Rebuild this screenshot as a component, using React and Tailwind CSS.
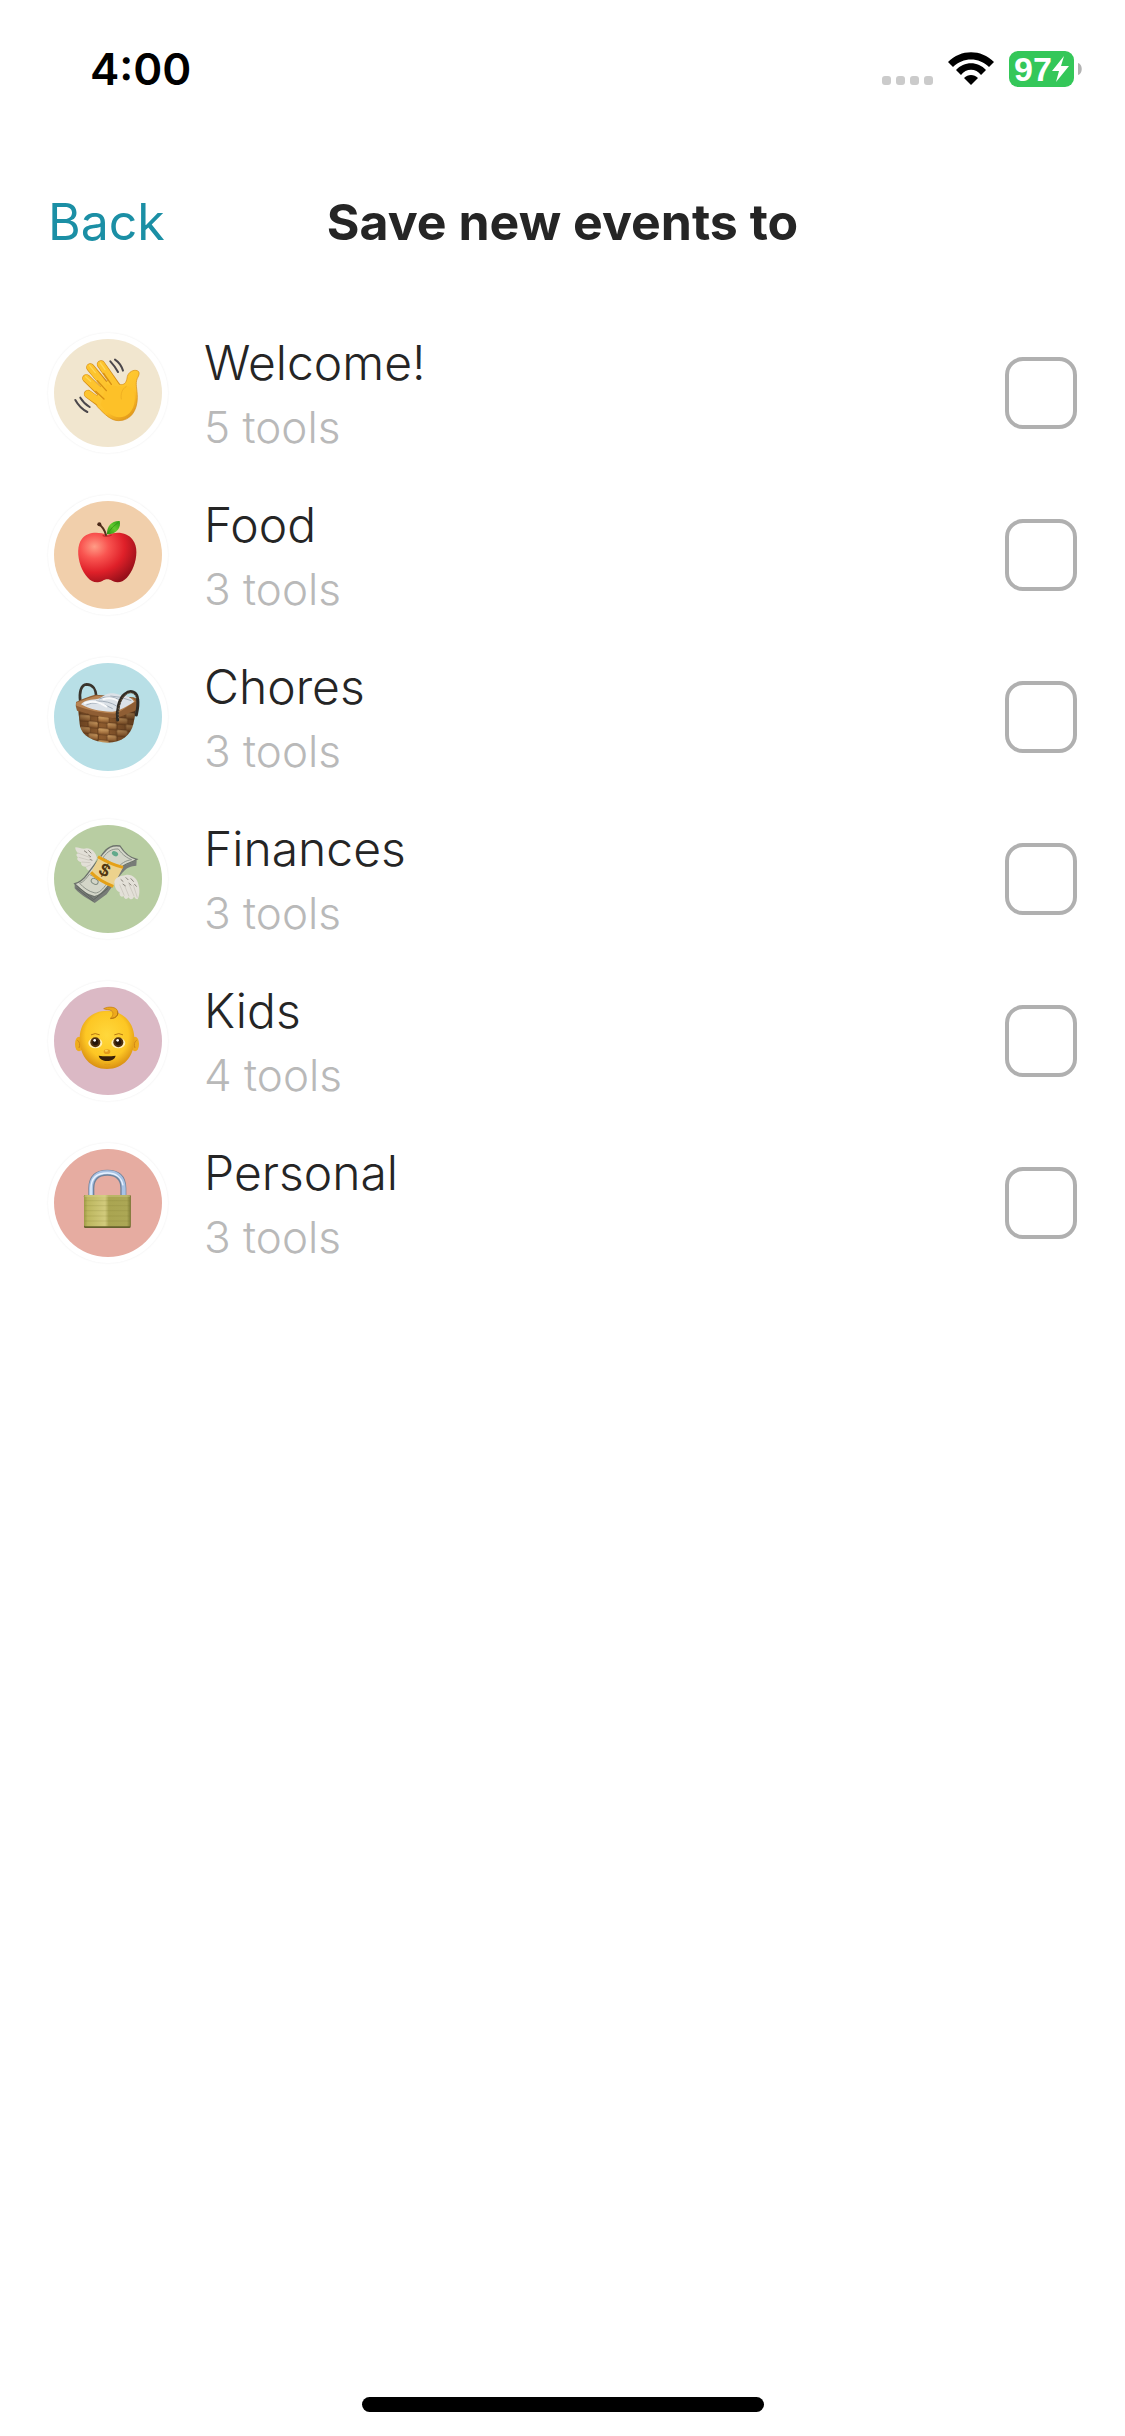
import React, { useState } from "react";

const WaveIcon = () => (
  <svg viewBox="42 42 324 324" className="w-full h-full" aria-hidden="true">
    <defs>
      <linearGradient id="handFill" x1="0.2" y1="0.1" x2="0.8" y2="1">
        <stop offset="0" stopColor="#ffcd35" />
        <stop offset="0.6" stopColor="#fdc02a" />
        <stop offset="1" stopColor="#de9317" />
      </linearGradient>
    </defs>
    <g fill="none" strokeLinecap="round" stroke="#d48c17" strokeWidth="25">
      <path d="M183 118 L228 182" />
      <path d="M151 127 L205 192" />
      <path d="M139 160 L190 210" />
      <path d="M144 207 L186 238" />
    </g>
    <path
      d="M205 165 C220 172 232 178 243 179 C257 179 260 168 262 154 C266 141 280 133 292 137 C301 141 297 151 292 160 C285 176 292 192 292 217 C292 257 272 287 236 287 C213 287 196 270 172 245 L166 226 L180 186Z"
      fill="url(#handFill)"
      stroke="#d48c17"
      strokeWidth="2"
    />
    <g fill="none" strokeLinecap="round" stroke="#fdc42e" strokeWidth="21">
      <path d="M183 118 L230 187" />
      <path d="M151 127 L210 202" />
      <path d="M139 160 L202 220" />
      <path d="M144 207 L192 240" />
    </g>
    <path
      d="M200 178 C228 185 244 187 262 184 C281 187 287 208 284 228 C281 258 262 277 238 277 C216 277 198 258 182 240 L190 210Z"
      fill="#fdc128"
    />
    <g fill="none" stroke="#d78f14" strokeWidth="4" strokeLinecap="round">
      <path d="M191 145 L214 178" />
      <path d="M172 167 L199 197" />
      <path d="M167 199 L192 222" />
      <path d="M259 184 C246 192 241 207 244 222" strokeWidth="2" opacity="0.5" />
    </g>
    <g fill="none" stroke="#ffe06c" strokeWidth="4" strokeLinecap="round" opacity="0.7">
      <path d="M181 114 L195 134" />
      <path d="M149 122 L166 143" />
      <path d="M137 155 L152 169" />
    </g>
    <g fill="none" stroke="#4b474b" strokeWidth="6" strokeLinecap="round">
      <path d="M211 109 Q225 124 234 141" />
      <path d="M225 104 Q242 115 249 137" />
      <path d="M121 218 Q132 236 149 246" />
      <path d="M106 225 Q119 249 142 261" />
    </g>
  </svg>
);

const AppleIcon = () => (
  <svg viewBox="42 42 324 324" className="w-full h-full" aria-hidden="true">
    <defs>
      <radialGradient id="appleFill" cx="0.28" cy="0.28" r="0.8">
        <stop offset="0" stopColor="#ff9c86" />
        <stop offset="0.3" stopColor="#f95450" />
        <stop offset="0.65" stopColor="#df2029" />
        <stop offset="1" stopColor="#98101a" />
      </radialGradient>
      <linearGradient id="leafFill" x1="1" y1="0" x2="0" y2="1">
        <stop offset="0" stopColor="#2c9e17" />
        <stop offset="0.5" stopColor="#62c92d" />
        <stop offset="1" stopColor="#2c8b13" />
      </linearGradient>
    </defs>
    <path
      d="M202 144 C229 132 262 136 278 158 C294 178 291 211 281 238 C270 268 251 287 232 286 C219 285 213 277 202 277 C191 277 186 285 174 286 C151 288 132 263 122 236 C112 207 111 174 126 155 C142 134 176 133 202 144Z"
      fill="url(#appleFill)"
    />
    <path d="M188 145 Q200 151 215 144" stroke="#a8191b" strokeWidth="4" fill="none" opacity="0.6" />
    <path
      d="M198 144 C194 129 187 118 176 112"
      fill="none"
      stroke="#55301c"
      strokeWidth="6"
      strokeLinecap="round"
    />
    <circle cx="178" cy="112" r="6" fill="#4b2919" />
    <path
      d="M201 142 C200 119 214 101 239 102 C244 121 231 142 201 142Z"
      fill="url(#leafFill)"
    />
    <path d="M203 139 Q216 119 235 106" fill="none" stroke="#288a13" strokeWidth="2" />
  </svg>
);

const BasketIcon = () => (
  <svg viewBox="42 42 324 324" className="w-full h-full" aria-hidden="true">
    <defs>
      <linearGradient id="basketShade" x1="0" x2="1">
        <stop offset="0" stopColor="#3a200e" stopOpacity="0.45" />
        <stop offset="0.4" stopColor="#3a200e" stopOpacity="0" />
        <stop offset="1" stopColor="#2a170a" stopOpacity="0.5" />
      </linearGradient>
      <linearGradient id="weaveFill" x1="0" x2="0" y1="0" y2="1">
        <stop offset="0" stopColor="#d5a467" />
        <stop offset="1" stopColor="#966232" />
      </linearGradient>
      <pattern id="weave" width="56" height="36" patternUnits="userSpaceOnUse" patternTransform="translate(118 196) skewY(5)">
        <rect width="56" height="36" fill="#6d4420" />
        <rect x="1" y="1" width="31" height="16" rx="3" fill="url(#weaveFill)" />
        <rect x="34" y="2" width="20" height="14" rx="2" fill="#8d5b2e" />
        <rect x="28" y="19" width="27" height="16" rx="3" fill="url(#weaveFill)" />
        <rect x="3" y="20" width="22" height="14" rx="2" fill="#8d5b2e" />
      </pattern>
    </defs>
    <path
      d="M121 158 C117 132 122 107 140 106 C158 106 168 121 169 143"
      fill="none"
      stroke="#39342c"
      strokeWidth="8"
    />
    <path
      d="M114 177 L120 232 C126 260 160 280 203 281 C245 281 272 258 280 225 L290 174Z"
      fill="url(#weave)"
    />
    <path
      d="M114 177 L120 232 C126 260 160 280 203 281 C245 281 272 258 280 225 L290 174Z"
      fill="url(#basketShade)"
    />
    <path
      d="M108 159 C128 149 145 143 165 137 L280 145 C292 148 298 154 297 166 L295 181 C256 197 239 206 218 207 C180 204 143 193 111 185 Q105 171 108 159Z"
      fill="#8f5e34"
    />
    <path
      d="M108 161 C135 151 151 144 171 140 L278 148 L287 157 L232 193 C194 195 145 183 109 170Z"
      fill="#b78352"
    />
    <path
      d="M123 166 C137 151 153 153 175 149 C190 145 196 132 214 133 C230 130 239 141 257 140 C270 144 279 151 282 158 C263 171 239 185 218 188 C184 189 151 181 123 166Z"
      fill="#dce2e8"
    />
    <path
      d="M139 168 Q170 151 218 179 M168 156 Q207 155 231 172 M177 150 Q207 136 243 154 M211 141 Q242 142 274 155"
      fill="none"
      stroke="#a3aeba"
      strokeWidth="3"
    />
    <path
      d="M132 163 Q167 149 201 174 M188 151 Q217 141 242 161"
      fill="none"
      stroke="#f9fafb"
      strokeWidth="6"
    />
    <path
      d="M233 213 C229 186 237 148 255 135 C272 120 292 129 293 151 C295 164 293 180 289 198"
      fill="none"
      stroke="#302c25"
      strokeWidth="9"
      strokeLinecap="round"
    />
    <path
      d="M236 208 C231 183 241 149 257 137 C271 126 286 131 290 148"
      fill="none"
      stroke="#7a6145"
      strokeWidth="3"
      strokeDasharray="5 4"
    />
  </svg>
);

const MoneyIcon = () => (
  <svg viewBox="42 42 324 324" className="w-full h-full" aria-hidden="true">
    {/* left wing */}
    <path
      d="M106 109 C119 109 127 116 140 112 C158 113 168 127 171 141 L153 178 C143 180 138 173 138 167 C126 168 121 159 124 154 C112 151 109 143 114 139 C105 132 111 127 116 128 C108 121 105 115 106 109Z"
      fill="#e2dfd7"
    />
    <path
      d="M114 126 L151 140 M116 139 L149 148 M125 153 L151 155 M139 167 L153 161"
      stroke="#c4c0b7"
      strokeWidth="2"
    />
    <path
      d="M132 119 L142 126 M145 118 L154 127 M145 132 L153 138 M149 145 L157 148"
      stroke="#8b877e"
      strokeWidth="3"
    />
    {/* bundle of notes */}
    <path d="M104 218 L104 232 C124 255 143 262 164 276 L200 250 L241 193 C260 166 274 166 289 164 L290 148 L237 170Z" fill="#777b77" />
    <path
      d="M104 218 C122 214 132 204 143 188 L187 130 C202 108 217 102 240 105 C255 129 276 142 291 145 C274 158 254 153 237 177 L205 224 C190 244 178 256 163 257 C136 251 120 236 104 218Z"
      fill="#d3d5c8"
      stroke="#6d736c"
      strokeWidth="4"
    />
    <path
      d="M119 217 C132 213 141 199 148 190 L201 217 C189 234 178 246 165 246 C144 241 130 229 119 217Z M189 140 C203 121 215 113 235 114 C250 134 260 140 275 146 C254 149 245 158 234 168Z"
      fill="none"
      stroke="#8f958c"
      strokeWidth="3"
    />
    <ellipse cx="225" cy="128" rx="10" ry="7" fill="#62a98b" transform="rotate(30 225 128)" />
    <ellipse cx="164" cy="211" rx="11" ry="8" fill="none" stroke="#7f8b80" strokeWidth="3" transform="rotate(30 164 211)" />
    <path d="M112 225 L161 266 L204 232 M109 231 L160 271" fill="none" stroke="#535953" strokeWidth="2" />
    {/* wrapper */}
    <path d="M179 134 C200 149 225 159 250 167 L218 229 C194 220 172 207 151 190Z" fill="#ecd28d" />
    <path d="M174 137 C201 153 225 163 249 169" fill="none" stroke="#e5a117" strokeWidth="9" />
    <path d="M153 184 C172 205 195 217 220 226" fill="none" stroke="#e5a117" strokeWidth="9" />
    <text
      x="192"
      y="195"
      fontFamily="'Liberation Sans', sans-serif"
      fontSize="54"
      fontWeight="700"
      fill="#513711"
      textAnchor="middle"
      transform="rotate(27 191 181)"
    >
      $
    </text>
    {/* right wing */}
    <path
      d="M223 213 C226 198 241 195 257 192 C276 188 292 203 295 220 C300 235 299 255 293 265 C286 265 284 260 282 256 C280 267 270 268 266 259 C259 268 252 263 251 255 C243 261 237 252 239 243 C230 242 223 228 223 213Z"
      fill="#e3e0d8"
    />
    <path
      d="M239 221 L253 254 M253 222 L267 256 M267 220 L282 255 M280 222 L292 260"
      stroke="#c4c0b7"
      strokeWidth="2"
    />
    <path
      d="M242 205 L250 212 M257 199 L265 207 M272 202 L281 212 M248 219 L257 225 M266 216 L274 223 M283 219 L290 227"
      stroke="#8b877e"
      strokeWidth="3"
    />
  </svg>
);

const BabyIcon = () => (
  <svg viewBox="42 42 324 324" className="w-full h-full" aria-hidden="true">
    <defs>
      <radialGradient id="babyFace" cx="0.5" cy="0.42" r="0.6">
        <stop offset="0" stopColor="#ffd83c" />
        <stop offset="0.65" stopColor="#fdc724" />
        <stop offset="1" stopColor="#d68a11" />
      </radialGradient>
    </defs>
    <ellipse cx="117" cy="213" rx="12" ry="22" fill="#efac1d" />
    <ellipse cx="285" cy="213" rx="12" ry="22" fill="#efac1d" />
    <path d="M112 202 Q123 208 117 225 M290 202 Q279 208 285 225" fill="none" stroke="#ce8518" strokeWidth="3" />
    <path
      d="M201 113 C249 113 282 148 283 195 C285 247 252 288 201 288 C150 288 117 247 119 195 C120 148 153 113 201 113Z"
      fill="url(#babyFace)"
    />
    <path
      d="M191 107 C205 99 230 101 233 115 C237 128 224 137 210 137 C219 130 222 118 214 113 C206 108 198 111 191 107Z"
      fill="#eda91d"
      stroke="#c17b12"
      strokeWidth="2"
    />
    <path d="M213 136 C229 136 236 126 232 115" fill="none" stroke="#b47313" strokeWidth="3" />
    <path d="M154 185 Q165 178 178 185 M224 185 Q237 178 248 185" fill="none" stroke="#b87913" strokeWidth="3" strokeLinecap="round" />
    <ellipse cx="166" cy="210" rx="21" ry="16" fill="#fff0b8" />
    <ellipse cx="235" cy="210" rx="21" ry="16" fill="#fff0b8" />
    <circle cx="166" cy="208" r="15" fill="#50300e" />
    <circle cx="235" cy="208" r="15" fill="#50300e" />
    <circle cx="166" cy="208" r="9" fill="#24150b" />
    <circle cx="235" cy="208" r="9" fill="#24150b" />
    <circle cx="164" cy="202" r="4" fill="#fff" />
    <circle cx="233" cy="202" r="4" fill="#fff" />
    <ellipse cx="201" cy="236" rx="10" ry="7" fill="#e59b1b" />
    <ellipse cx="199" cy="233" rx="5" ry="3" fill="#ffcf4f" />
    <path d="M176 248 Q201 252 227 248 C224 259 214 264 201 264 C189 264 179 259 176 248Z" fill="#392009" />
    <path d="M193 274 Q202 277 211 274" fill="none" stroke="#dc9819" strokeWidth="2" />
  </svg>
);

const LockIcon = () => (
  <svg viewBox="42 42 324 324" className="w-full h-full" aria-hidden="true">
    <defs>
      <linearGradient id="lockBody" x1="0" x2="1">
        <stop offset="0" stopColor="#9e9b46" />
        <stop offset="0.08" stopColor="#bdb75f" />
        <stop offset="0.45" stopColor="#d1ca7c" />
        <stop offset="0.53" stopColor="#aaa551" />
        <stop offset="0.92" stopColor="#aca755" />
        <stop offset="1" stopColor="#807d36" />
      </linearGradient>
    </defs>
    <path
      d="M154 184 L154 160 C154 127 172 113 202 113 C232 113 250 127 250 160 L250 184"
      fill="none"
      stroke="#70839b"
      strokeWidth="18"
    />
    <path
      d="M153 184 L153 160 C153 127 172 112 202 112 C232 112 251 127 251 160 L251 184"
      fill="none"
      stroke="#a9c3e5"
      strokeWidth="12"
    />
    <path
      d="M153 181 L153 160 C153 129 172 114 202 114 C227 114 245 127 249 151"
      fill="none"
      stroke="#e8f3ff"
      strokeWidth="4"
    />
    <rect x="132" y="180" width="140" height="99" rx="4" fill="#66602d" />
    <rect x="132" y="180" width="140" height="94" rx="4" fill="url(#lockBody)" />
    <path
      d="M134 183 H270"
      stroke="#dcd794"
      strokeWidth="2"
    />
    <path
      d="M134 197 H270 M134 212 H270 M134 227 H270 M134 243 H270 M134 258 H270"
      stroke="#7e7b35"
      strokeWidth="1"
      opacity="0.6"
    />
  </svg>
);

const groups = [
  { id: "welcome", name: "Welcome!", tools: 5, icon: WaveIcon, color: "bg-[#f1e6cf]" },
  { id: "food", name: "Food", tools: 3, icon: AppleIcon, color: "bg-[#f1cfab]" },
  { id: "chores", name: "Chores", tools: 3, icon: BasketIcon, color: "bg-[#b8dfe6]" },
  { id: "finances", name: "Finances", tools: 3, icon: MoneyIcon, color: "bg-[#b8cda2]" },
  { id: "kids", name: "Kids", tools: 4, icon: BabyIcon, color: "bg-[#dbb9c5]" },
  { id: "personal", name: "Personal", tools: 3, icon: LockIcon, color: "bg-[#e6aca1]" },
];

const StatusBar = () => (
  <div className="flex h-[138px] items-center justify-between pl-[90px] pr-[43px]">
    <span className="text-[44px] leading-[48px] font-semibold text-black">4:00</span>

    <div className="flex items-center">
      <svg width="52" height="36" viewBox="0 0 52 36" fill="#cbcbcb" aria-hidden="true">
        <rect x="0" y="25" width="9" height="9" rx="3" />
        <rect x="14" y="25" width="9" height="9" rx="3" />
        <rect x="28" y="25" width="9" height="9" rx="3" />
        <rect x="42" y="25" width="9" height="9" rx="3" />
      </svg>

      <svg className="ml-[14px]" width="46" height="36" viewBox="0 0 46 36" aria-hidden="true">
        <path d="M0 11 C13 -2 33 -2 46 11 L41 16 C31 6 15 6 5 16Z" />
        <path d="M8 19 C16 10 30 10 38 19 L33 24 C28 17 18 17 13 24Z" />
        <path d="M16 27 C20 23 26 23 30 27 L23 34Z" />
      </svg>

      <div className="ml-[15px] flex h-[36px] w-[65px] items-center justify-center rounded-[9px] bg-[#34c759] text-white">
        <span className="font-['Liberation_Sans',sans-serif] text-[34px] leading-[36px] font-bold">97</span>
        <svg width="17" height="26" viewBox="0 0 17 26" fill="currentColor" aria-hidden="true">
          <path d="M12 0 L0 15 H7 L4 26 L17 10 H9Z" />
        </svg>
      </div>
      <svg className="ml-[4px]" width="4" height="12" viewBox="0 0 4 12" fill="#b3b3b3" aria-hidden="true">
        <path d="M0 0 C5 1 5 11 0 12Z" />
      </svg>
    </div>
  </div>
);

const App = () => {
  const [selected, setSelected] = useState([]);

  const toggle = (id) => {
    setSelected((prev) =>
      prev.includes(id) ? prev.filter((item) => item !== id) : [...prev, id]
    );
  };

  return (
    <div className="flex min-h-screen flex-col bg-white font-['Inter',sans-serif] text-[#252525]">
      <StatusBar />

      {/* Header */}
      <header className="grid h-[168px] grid-cols-[1fr_auto_1fr] items-center px-[48px]">
        <button type="button" className="justify-self-start text-[50px] leading-[64px] text-[#1b8fa5]">
          Back
        </button>
        <h1 className="text-[50px] leading-[64px] font-bold">Save new events to</h1>
      </header>

      {/* Groups */}
      <main className="pt-[6px]">
        {groups.map((group) => (
          <label
            key={group.id}
            className="flex h-[162px] cursor-pointer items-center px-[48px]"
          >
            <span className="size-[120px] rounded-full bg-white p-[6px] shadow-[0_0_2px_rgba(0,0,0,0.08)]">
              <span className={`block size-full rounded-full ${group.color}`}>
                <group.icon />
              </span>
            </span>

            <span className="ml-[36px] flex flex-1 flex-col pt-[4px]">
              <span className="text-[48px] leading-[64px] font-light">{group.name}</span>
              <span className="text-[44px] leading-[64px] font-light text-[#b9b9b9]">
                {group.tools} tools
              </span>
            </span>

            <input
              type="checkbox"
              checked={selected.includes(group.id)}
              onChange={() => toggle(group.id)}
              className="size-[72px] appearance-none rounded-[18px] border-4 border-[#b0b0b0] checked:border-[#1b8fa5] checked:bg-[#1b8fa5]"
            />
          </label>
        ))}
      </main>

      {/* Home indicator */}
      <div className="mx-auto mt-auto mb-[24px] h-[15px] w-[402px] rounded-full bg-black" />
    </div>
  );
};

export default App;
